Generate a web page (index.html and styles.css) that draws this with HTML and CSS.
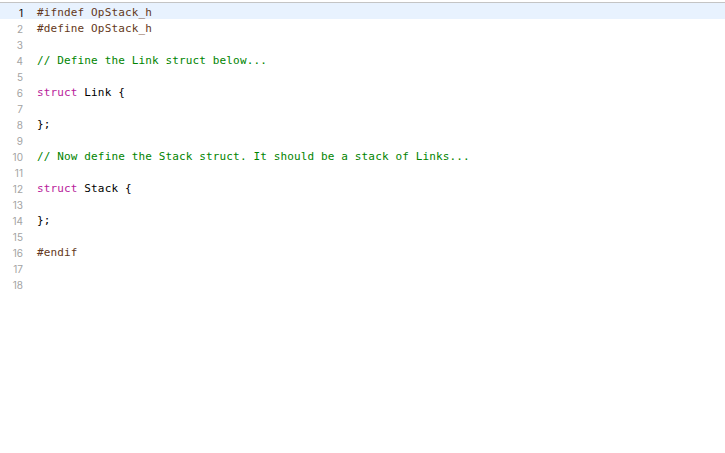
FILE: index.html
```html
<!DOCTYPE html>
<html lang="en">
<head>
    <meta charset="UTF-8">
    <title>OpStack.h</title>
    <link rel="stylesheet" href="styles.css">
</head>
<body>
    <div class="editor">
        <div class="line current"><span class="num">1</span><span class="code pre">#ifndef OpStack_h</span></div>
        <div class="line"><span class="num">2</span><span class="code pre">#define OpStack_h</span></div>
        <div class="line"><span class="num">3</span><span class="code"></span></div>
        <div class="line"><span class="num">4</span><span class="code comment">// Define the Link struct below...</span></div>
        <div class="line"><span class="num">5</span><span class="code"></span></div>
        <div class="line"><span class="num">6</span><span class="code"><span class="kw">struct</span> Link {</span></div>
        <div class="line"><span class="num">7</span><span class="code"></span></div>
        <div class="line"><span class="num">8</span><span class="code">};</span></div>
        <div class="line"><span class="num">9</span><span class="code"></span></div>
        <div class="line"><span class="num">10</span><span class="code comment">// Now define the Stack struct. It should be a stack of Links...</span></div>
        <div class="line"><span class="num">11</span><span class="code"></span></div>
        <div class="line"><span class="num">12</span><span class="code"><span class="kw">struct</span> Stack {</span></div>
        <div class="line"><span class="num">13</span><span class="code"></span></div>
        <div class="line"><span class="num">14</span><span class="code">};</span></div>
        <div class="line"><span class="num">15</span><span class="code"></span></div>
        <div class="line"><span class="num">16</span><span class="code pre">#endif</span></div>
        <div class="line"><span class="num">17</span><span class="code"></span></div>
        <div class="line"><span class="num">18</span><span class="code"></span></div>
    </div>
</body>
</html>
```

FILE: styles.css
```css
body {
    margin: 0;
    padding-top: 2px;
    background-color: #fff;
    font-family: "DejaVu Sans Mono", "Liberation Mono", monospace;
    font-size: 11px;
    color: #000;
}

.editor {
    border-top: 1px solid #c4c4c4;
}

.line {
    display: flex;
    box-sizing: border-box;
    height: 16px;
    padding-top: 2px;
    line-height: 16px;
    white-space: pre;
}

.line.current {
    background-color: #e8f2fe;
}

.num {
    width: 23px;
    text-align: right;
    color: #a3a3a3;
    font-family: "Inter", "Liberation Sans", sans-serif;
    font-size: 10px;
}

.current .num {
    color: #000;
}

.code {
    padding-left: 14px;
    letter-spacing: 0.14px;
}

.pre {
    color: #643820;
}

.comment {
    color: #008400;
}

.kw {
    color: #b8219b;
}
```
